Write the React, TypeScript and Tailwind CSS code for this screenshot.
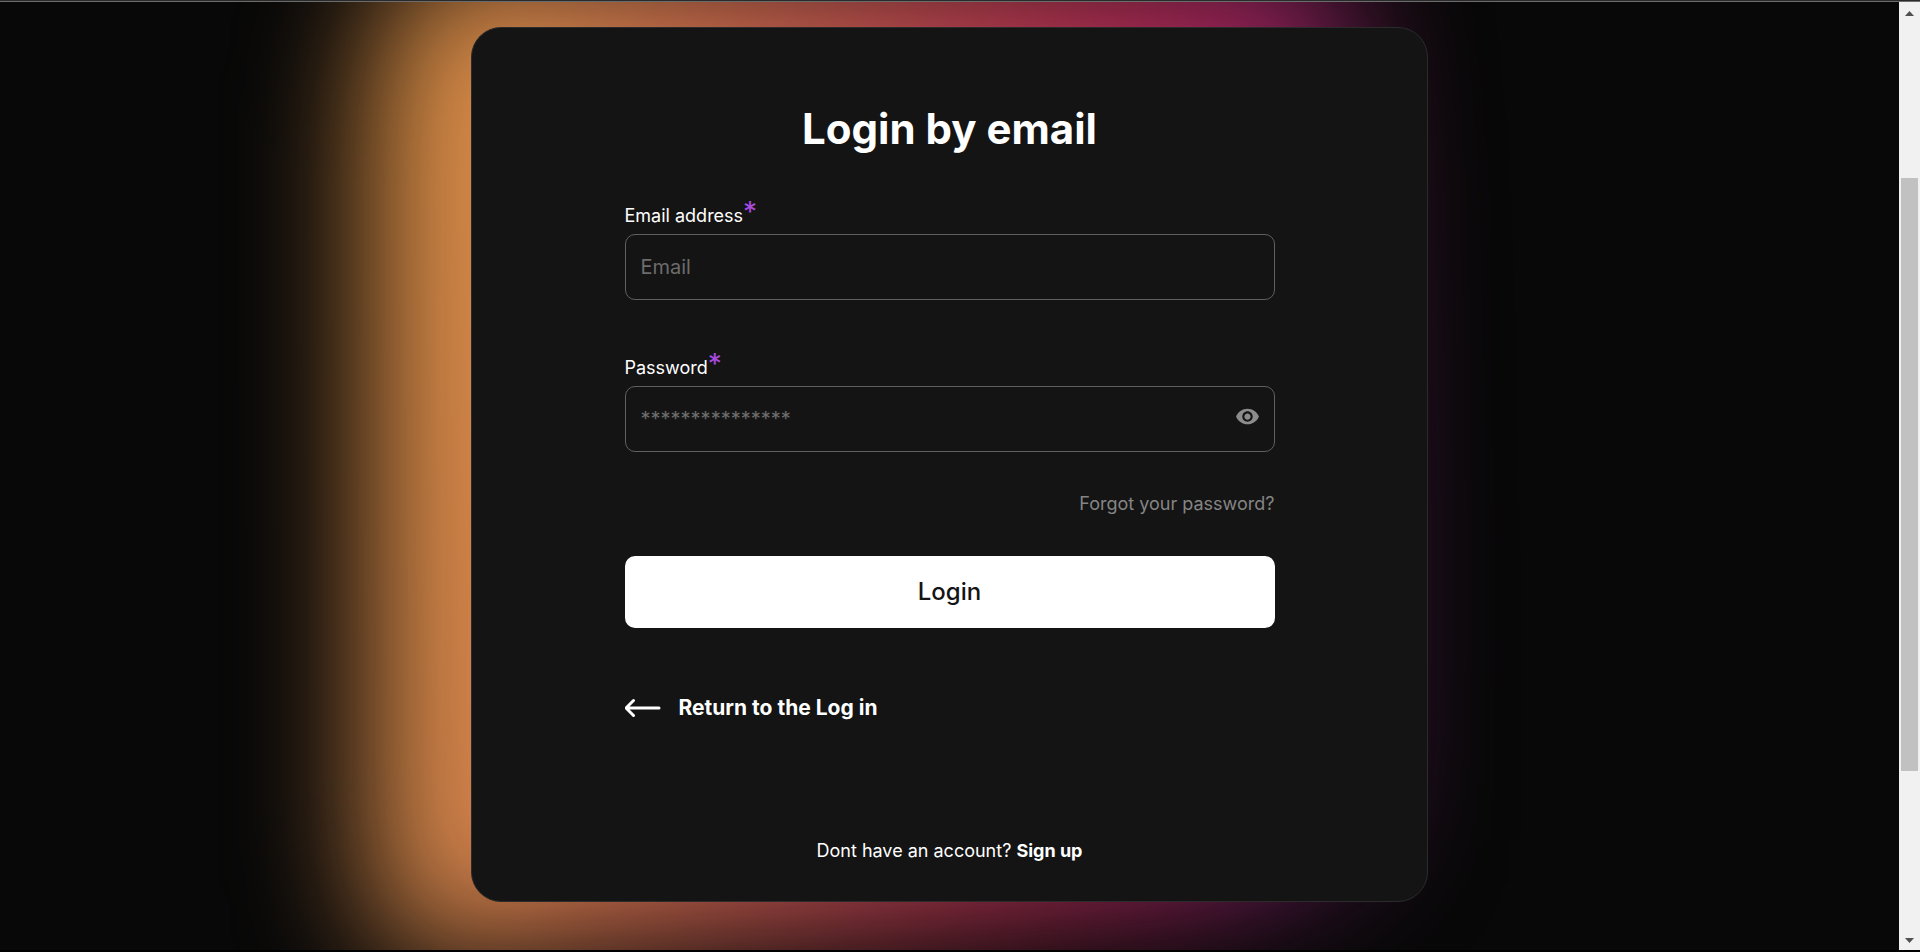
import React, { useState } from 'react';
import { MdVisibility } from 'react-icons/md';

const inputClass =
  'w-full h-[66px] rounded-[10px] border border-[#606060] bg-transparent pl-[15px] text-xl text-white placeholder:text-[#6c6c6c] outline-none focus:border-white';

const Required: React.FC = () => (
  <span className="self-start text-[28px] leading-5 text-[#a94be0]">*</span>
);

const Scrollbar: React.FC = () => (
  <div className="flex w-[21px] shrink-0 flex-col items-center bg-[#f1f1f1]" aria-hidden="true">
    <svg className="h-[21px] w-[21px] shrink-0" viewBox="0 0 21 21">
      <path d="M6 14h9l-4.5-5z" fill="#505050" />
    </svg>
    <div className="flex w-[17px] flex-1 flex-col">
      <div className="flex-[155]"></div>
      <div className="flex-[593] bg-[#c1c1c1]"></div>
      <div className="flex-[158]"></div>
    </div>
    <svg className="h-[21px] w-[21px] shrink-0" viewBox="0 0 21 21">
      <path d="M6 9h9l-4.5 5z" fill="#505050" />
    </svg>
  </div>
);

const App: React.FC = () => {
  const [showPassword, setShowPassword] = useState(false);

  return (
    <div className="flex min-h-screen flex-col border-b-2 border-black bg-[#080808] font-['Inter',sans-serif] text-white">
      <div className="h-0.5 shrink-0 border-b border-[#6b6b6b] bg-[#2a2a2a]"></div>

      <div className="flex flex-1">
        <main className="flex-1 overflow-hidden px-6 pt-[25px] pb-12">
          <div className="relative mx-auto max-w-[957px]">
            {/* Glow behind the card */}
            <div className="absolute -top-[62px] -bottom-[54px] -left-[100px] right-[40px] blur-[64px]">
              <div className="h-full w-full bg-[linear-gradient(96deg,#d9903f_0%,#d98a4c_14%,#c6664c_34%,#b53550_60%,#a02258_78%,#7a2070_90%,#4c1858_100%)] [clip-path:polygon(4%_0,95%_0,97%_20%,98%_60%,98%_88%,85%_94%,50%_97%,3%_100%,0_92%,0_12%)]"></div>
            </div>

            {/* Card */}
            <div className="relative rounded-[30px] border border-[#2b2b2b] bg-[#141414] px-6 pt-[74px] pb-[38px]">
              <form className="mx-auto max-w-[650px]" onSubmit={(e) => e.preventDefault()}>
                <h1 className="text-center text-[42px] leading-[54px] font-bold">Login by email</h1>

                <div className="mt-[46px]">
                  <label htmlFor="email" className="mb-1 flex h-7 items-center text-lg leading-6">
                    Email address
                    <Required />
                  </label>
                  <input id="email" type="email" placeholder="Email" className={inputClass} />
                </div>

                <div className="mt-[54px]">
                  <label htmlFor="password" className="mb-1 flex h-7 items-center text-lg leading-6">
                    Password
                    <Required />
                  </label>
                  <div className="relative">
                    <input
                      id="password"
                      type={showPassword ? 'text' : 'password'}
                      placeholder="***************"
                      className={inputClass}
                    />
                    <button
                      type="button"
                      aria-label="Show password"
                      onClick={() => setShowPassword(!showPassword)}
                      className="absolute top-[18px] right-[15px] text-[#8c8c8c]"
                    >
                      <MdVisibility size={25} />
                    </button>
                  </div>
                </div>

                <div className="mt-10 text-right text-lg leading-6 text-[#858585]">
                  <a href="#forgot">Forgot your password?</a>
                </div>

                <button
                  type="submit"
                  className="mt-10 h-[72px] w-full rounded-[10px] bg-white text-2xl font-medium text-[#141414]"
                >
                  Login
                </button>

                <a href="#login" className="mt-16 flex items-center gap-[18px] text-[21px] leading-8 font-bold">
                  <svg width="36" height="20" viewBox="0 0 36 20" fill="none" stroke="#fff" strokeWidth="3" strokeLinecap="round">
                    <path d="M34 10H1.500M8.500 2.500L1 10l7.500 7.500" />
                  </svg>
                  Return to the Log in
                </a>

                <p className="mt-[115px] text-center text-lg leading-6">
                  Dont have an account?{' '}
                  <a href="#signup" className="font-bold">Sign up</a>
                </p>
              </form>
            </div>
          </div>
        </main>

        <Scrollbar />
      </div>
    </div>
  );
};

export default App;
